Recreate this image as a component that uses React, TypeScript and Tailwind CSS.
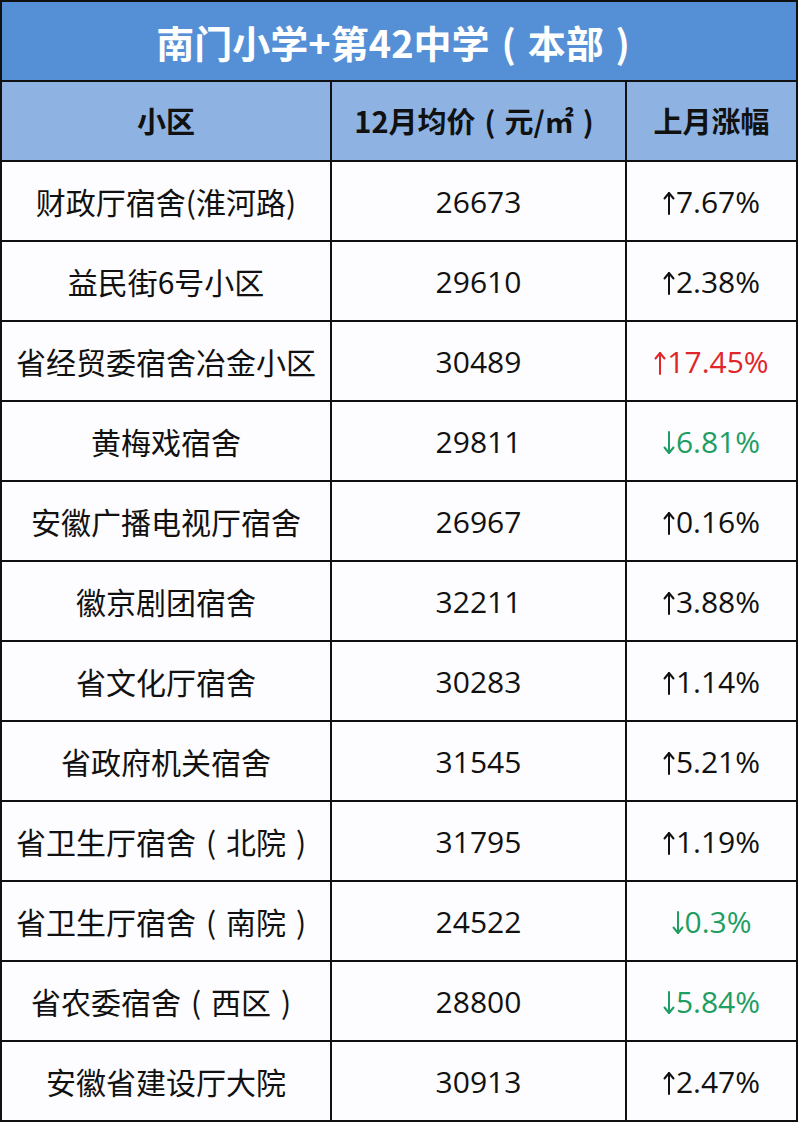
import React from "react";

type Row = { name: string; price: string; change: string; tone: "up" | "red" | "down" };

const rows: Row[] = [
  { name: "财政厅宿舍(淮河路)", price: "26673", change: "7.67%", tone: "up" },
  { name: "益民街6号小区", price: "29610", change: "2.38%", tone: "up" },
  { name: "省经贸委宿舍冶金小区", price: "30489", change: "17.45%", tone: "red" },
  { name: "黄梅戏宿舍", price: "29811", change: "6.81%", tone: "down" },
  { name: "安徽广播电视厅宿舍", price: "26967", change: "0.16%", tone: "up" },
  { name: "徽京剧团宿舍", price: "32211", change: "3.88%", tone: "up" },
  { name: "省文化厅宿舍", price: "30283", change: "1.14%", tone: "up" },
  { name: "省政府机关宿舍", price: "31545", change: "5.21%", tone: "up" },
  { name: "省卫生厅宿舍（北院）", price: "31795", change: "1.19%", tone: "up" },
  { name: "省卫生厅宿舍（南院）", price: "24522", change: "0.3%", tone: "down" },
  { name: "省农委宿舍（西区）", price: "28800", change: "5.84%", tone: "down" },
  { name: "安徽省建设厅大院", price: "30913", change: "2.47%", tone: "up" },
];

const cjk = { fontFamily: '"Noto Sans CJK SC", "Noto Sans", sans-serif' };
const latin = { fontFamily: '"Open Sans", "Noto Sans CJK SC", sans-serif' };

function WideParens({ text }: { text: string }) {
  const parts = text.split(/([（）])/);
  return (
    <>
      {parts.map((p, i) =>
        p === "（" || p === "）" ? (
          <span key={i} className="inline-block w-[1em] text-center">
            {p === "（" ? "(" : ")"}
          </span>
        ) : (
          <React.Fragment key={i}>{p}</React.Fragment>
        )
      )}
    </>
  );
}

function Arrow({ down }: { down?: boolean }) {
  return (
    <svg width="12" height="24" viewBox="0 0 12 24" className="inline-block mr-[1px] -mt-[3px] align-middle" aria-hidden>
      {down ? (
        <g fill="none" stroke="currentColor" strokeWidth="2" strokeLinecap="round" strokeLinejoin="round">
          <path d="M6 1 V22" />
          <path d="M1.5 16.5 L6 22 L10.5 16.5" />
        </g>
      ) : (
        <g fill="none" stroke="currentColor" strokeWidth="2" strokeLinecap="round" strokeLinejoin="round">
          <path d="M6 23 V2" />
          <path d="M1.5 7.5 L6 2 L10.5 7.5" />
        </g>
      )}
    </svg>
  );
}

export default function App() {
  return (
    <div className="w-[800px] h-[1122px] bg-white" style={cjk}>
      <table className="w-[798px] border-collapse table-fixed text-[#111]">
        <colgroup>
          <col className="w-[330px]" />
          <col className="w-[295px]" />
          <col />
        </colgroup>
        <thead>
          <tr className="h-[80px]">
            <th
              colSpan={3}
              className="border-2 border-[#111] bg-[#5590d6] text-white text-[38px] font-bold text-center align-middle whitespace-nowrap"
            >
              <WideParens text="南门小学+第42中学（本部）" />
            </th>
          </tr>
          <tr className="h-[80px] bg-[#8eb3e3]">
            <th className="border-2 border-[#111] text-[29px] font-bold text-center align-middle">小区</th>
            <th className="border-2 border-[#111] text-[29px] font-bold text-center align-middle whitespace-nowrap">
              <WideParens text="12月均价（元/㎡）" />
            </th>
            <th className="border-2 border-[#111] text-[29px] font-bold text-center align-middle">上月涨幅</th>
          </tr>
        </thead>
        <tbody>
          {rows.map((r) => (
            <tr key={r.name} className="h-[80px] bg-[#fdfcfe]">
              <td className="border-2 border-[#111] text-[30px] text-center align-middle whitespace-nowrap">
                <WideParens text={r.name} />
              </td>
              <td className="border-2 border-[#111] text-[30px] text-center align-middle" style={latin}>
                {r.price}
              </td>
              <td
                style={latin}
                className={
                  "border-2 border-[#111] text-[30px] text-center align-middle whitespace-nowrap " +
                  (r.tone === "red" ? "text-[#e0262a]" : r.tone === "down" ? "text-[#1e9e63]" : "text-[#111]")
                }
              >
                <Arrow down={r.tone === "down"} />
                {r.change}
              </td>
            </tr>
          ))}
        </tbody>
      </table>
    </div>
  );
}
